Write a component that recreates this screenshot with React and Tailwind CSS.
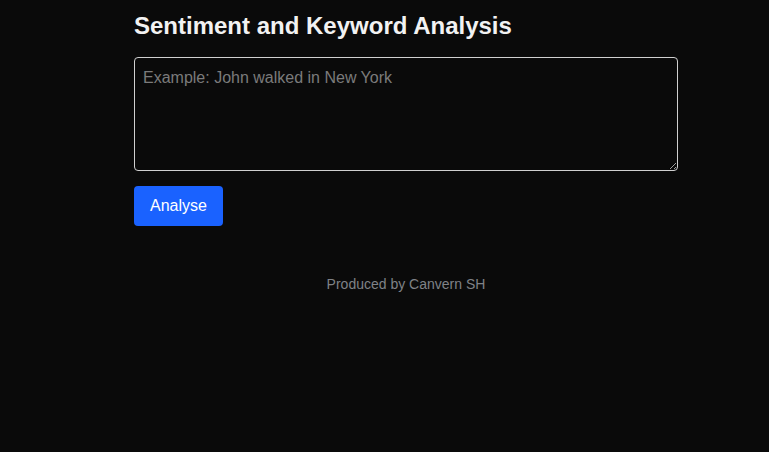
import React, { useState } from 'react';

const App = () => {
  const [text, setText] = useState('');

  return (
    <div className="min-h-screen bg-[#0a0a0a] font-['Liberation_Sans',Arial,sans-serif]">
      <div className="ml-[134px] w-[544px] pt-[12px]">
        <h1 className="text-[24px] leading-[28px] font-bold text-[#f2f2f2]">Sentiment and Keyword Analysis</h1>
        <textarea
          value={text}
          onChange={e => setText(e.target.value)}
          placeholder="Example: John walked in New York"
          className="mt-[17px] block w-[544px] h-[114px] rounded-[4px] border border-[#d0d0d0] bg-[#0a0a0a] px-2 pt-[8px] text-[16px] text-[#e5e5e5] placeholder:text-[#7b7b7b] outline-none"
        />
        <button className="mt-[15px] h-[40px] w-[89px] rounded-[4px] bg-[#1a62ff] text-[16px] text-white">
          Analyse
        </button>
        <p className="mt-[50px] text-center text-[14px] leading-[16px] text-[#7f8287]">Produced by Canvern SH</p>
      </div>
    </div>
  );
};

export default App;
